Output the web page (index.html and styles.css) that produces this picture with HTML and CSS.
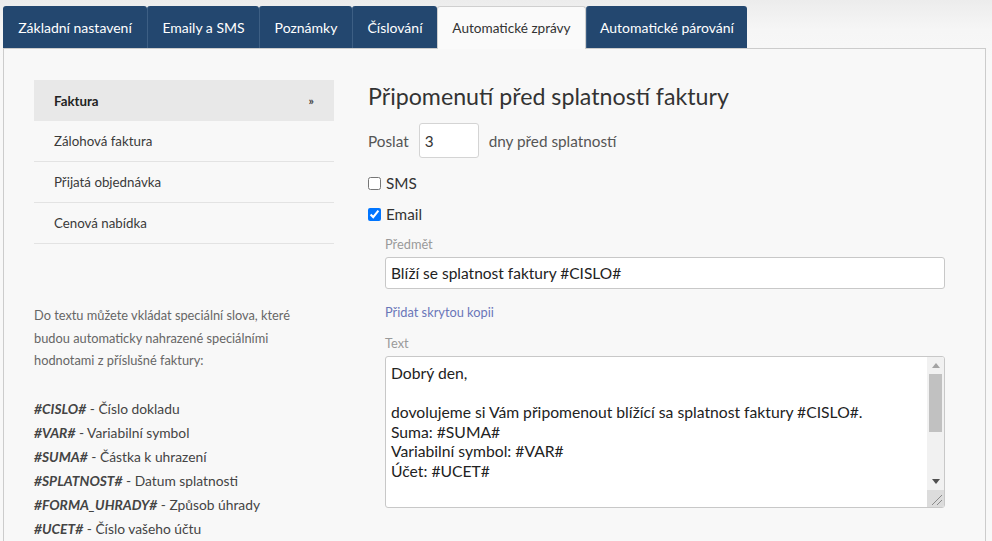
FILE: index.html
```html
<!DOCTYPE html>
<html lang="cs">
<head>
<meta charset="utf-8">
<title>Automatické zprávy</title>
<link rel="stylesheet" href="styles.css">
</head>
<body>
<div class="page">
  <nav class="tabs">
    <a class="tab">Základní nastavení</a>
    <a class="tab">Emaily a SMS</a>
    <a class="tab">Poznámky</a>
    <a class="tab">Číslování</a>
    <a class="tab active">Automatické zprávy</a>
    <a class="tab">Automatické párování</a>
  </nav>
  <main class="panel">
    <aside class="side">
      <ul class="menu">
        <li class="menu-item current"><span>Faktura</span><span class="arrow">»</span></li>
        <li class="menu-item">Zálohová faktura</li>
        <li class="menu-item">Přijatá objednávka</li>
        <li class="menu-item">Cenová nabídka</li>
      </ul>
      <p class="help">Do textu můžete vkládat speciální slova, které budou automaticky nahrazené speciálními hodnotami z příslušné faktury:</p>
      <ul class="vars">
        <li><b>#CISLO#</b> - Číslo dokladu</li>
        <li><b>#VAR#</b> - Variabilní symbol</li>
        <li><b>#SUMA#</b> - Částka k uhrazení</li>
        <li><b>#SPLATNOST#</b> - Datum splatnosti</li>
        <li><b>#FORMA_UHRADY#</b> - Způsob úhrady</li>
        <li><b>#UCET#</b> - Číslo vašeho účtu</li>
      </ul>
    </aside>
    <section class="content">
      <h1 class="title">Připomenutí před splatností faktury</h1>
      <div class="send-row">
        <span>Poslat</span>
        <input class="days" type="text" value="3">
        <span>dny před splatností</span>
      </div>
      <label class="check"><input type="checkbox"><span>SMS</span></label>
      <label class="check"><input type="checkbox" checked><span>Email</span></label>
      <div class="email-block">
        <div class="field-label">Předmět</div>
        <input class="subject" type="text" value="Blíží se splatnost faktury #CISLO#">
        <a class="link">Přidat skrytou kopii</a>
        <div class="field-label">Text</div>
        <div class="text-wrap">
          <textarea class="body-text">Dobrý den,

dovolujeme si Vám připomenout blížící sa splatnost faktury #CISLO#.
Suma: #SUMA#
Variabilní symbol: #VAR#
Účet: #UCET#



S pozdravem

Váš dodavatel</textarea>
          <div class="fake-scroll" aria-hidden="true">
            <div class="sb-btn">
              <svg width="8" height="5" viewBox="0 0 8 5"><polygon points="4,0 8,5 0,5" fill="#a3a3a3"/></svg>
            </div>
            <div class="sb-track"><div class="sb-thumb"></div></div>
            <div class="sb-btn">
              <svg width="8" height="5" viewBox="0 0 8 5"><polygon points="0,0 8,0 4,5" fill="#505050"/></svg>
            </div>
            <div class="sb-corner">
              <svg width="17" height="17" viewBox="0 0 17 17"><path d="M5 15 L15 5 M10 15 L15 10" stroke="#8a8a8a" stroke-width="1"/></svg>
            </div>
          </div>
        </div>
      </div>
    </section>
  </main>
</div>
</body>
</html>
```
FILE: styles.css
```css
* { box-sizing: border-box; }
html, body { margin: 0; padding: 0; }
body {
  font-family: Lato, "Liberation Sans", sans-serif;
  color: #333;
  background: linear-gradient(#ececec 0px, #f6f6f6 30px, #f8f8f8 60px);
  height: 541px;
  overflow: hidden;
}
.page { padding: 6px 6px 0 3px; }
.tabs {
  display: flex;
  height: 42px;
}
.tab {
  display: flex;
  align-items: center;
  justify-content: center;
  white-space: nowrap;
  flex: none;
  padding: 0;
  background: #23476f;
  color: #fff;
  font-size: 14px;
  border-left: 1px solid #3d5f84;
  border-radius: 3px 3px 0 0;
}
.tab:first-child { border-left: 0; }
.tab:nth-child(1) { width: 144px; }
.tab:nth-child(2) { width: 112px; }
.tab:nth-child(3) { width: 93px; }
.tab:nth-child(4) { width: 85px; }
.tab:nth-child(5) { width: 149px; }
.tab:nth-child(6) { width: 161px; }
.tab.active {
  background: #fafafa;
  color: #333;
  border: 1px solid #cfcfcf;
  border-bottom: 0;
  font-size: 13.6px;
  position: relative;
  z-index: 1;
  margin-bottom: -1px;
  height: 43px;
}
.panel {
  display: flex;
  background: #f8f8f8;
  border: 1px solid #cccccc;
  border-bottom: 0;
  height: 500px;
  padding: 31px 0 0 30px;
}
.side { width: 300px; flex: none; }
.menu { list-style: none; margin: 0; padding: 0; }
.menu-item {
  height: 41px;
  display: flex;
  align-items: center;
  justify-content: space-between;
  padding: 0 20px;
  font-size: 13.3px;
  color: #3a3a3a;
  border-bottom: 1px solid #e3e3e3;
}
.menu-item.current {
  background: #e8e8e8;
  font-weight: bold;
  border-bottom: 0;
  color: #222;
}
.arrow { font-size: 12px; font-weight: bold; padding-right: 0; color: #444; }
.help {
  margin: 60px 0 0 0;
  font-size: 12.8px;
  line-height: 22.7px;
  color: #666;
  width: 285px;
}
.vars {
  list-style: none;
  margin: 25px 0 0 0;
  padding: 0;
  font-size: 13.8px;
  line-height: 24px;
  color: #444;
}
.vars b { font-style: italic; }
.content { margin-left: 34px; flex: 1; padding-right: 40px; }
.title {
  margin: 1px 0 0 0;
  font-weight: normal;
  font-size: 23.2px;
  line-height: 30px;
  color: #333;
}
.send-row {
  display: flex;
  align-items: center;
  margin-top: 12px;
  font-size: 15.3px;
  color: #555;
}
.days {
  width: 60px;
  height: 35px;
  margin: 0 10px;
  border: 1px solid #d4d4d4;
  border-radius: 3px;
  background: #fff;
  font: 15.3px Lato, "Liberation Sans", sans-serif;
  color: #333;
  padding: 0 5px;
}
.check {
  display: flex;
  align-items: center;
  font-size: 15.3px;
  color: #333;
  height: 20px;
  margin-top: 11px;
}
.send-row + .check { margin-top: 15px; }
.check input { margin: 0 5px 0 0; width: 13px; height: 13px; }
.email-block { margin-left: 17px; padding-top: 12px; }
.field-label {
  font-size: 12.8px;
  color: #9a9a9a;
  line-height: 17px;
}
.subject {
  display: block;
  width: 100%;
  height: 32px;
  margin-top: 4px;
  border: 1px solid #c8c8c8;
  border-radius: 3px;
  background: #fff;
  font: 15.5px Lato, "Liberation Sans", sans-serif;
  color: #222;
  padding: 0 5px;
}
.link {
  display: block;
  margin: 15px 0 14px 0;
  font-size: 12.8px;
  color: #6a76b8;
  line-height: 17px;
}
.text-wrap {
  position: relative;
  margin-top: 4px;
  height: 152px;
}
.body-text {
  display: block;
  width: 100%;
  height: 152px;
  border: 1px solid #c8c8c8;
  border-radius: 3px;
  background: #fff;
  font: 15.7px/19.5px Lato, "Liberation Sans", sans-serif;
  color: #222;
  padding: 7px 22px 7px 5px;
  resize: none;
  overflow: hidden;
}
.fake-scroll {
  position: absolute;
  top: 1px;
  right: 1px;
  bottom: 1px;
  width: 17px;
  display: flex;
  flex-direction: column;
  background: #f1f1f1;
  border-radius: 0 2px 2px 0;
  overflow: hidden;
}
.sb-btn {
  height: 17px;
  display: flex;
  align-items: center;
  justify-content: center;
  flex: none;
}
.sb-track {
  flex: 1;
  padding: 0 2px;
}
.sb-thumb {
  height: 58px;
  background: #c1c1c1;
}
.sb-corner {
  height: 17px;
  flex: none;
  background: #dcdcdc;
}
.sb-corner svg { display: block; }
```
